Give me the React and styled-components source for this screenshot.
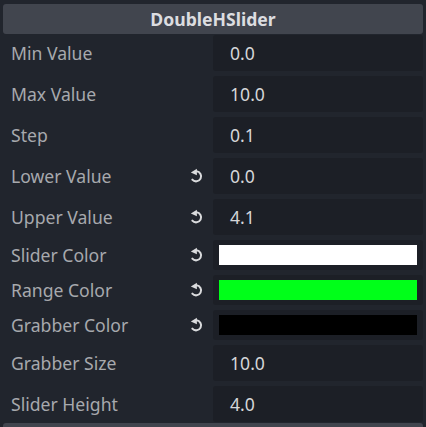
import styled, { createGlobalStyle } from "styled-components"

const GlobalStyle = createGlobalStyle`
  html, body {
    margin: 0;
    padding: 0;
    background: #21252d;
  }
  body {
    font-family: "Noto Sans", "Open Sans", sans-serif;
  }
`

const rows = [
  { label: "Min Value", value: "0.0" },
  { label: "Max Value", value: "10.0" },
  { label: "Step", value: "0.1" },
  { label: "Lower Value", value: "0.0", reset: true },
  { label: "Upper Value", value: "4.1", reset: true },
  { label: "Slider Color", color: "#ffffff", reset: true },
  { label: "Range Color", color: "#00ff19", reset: true },
  { label: "Grabber Color", color: "#000000", reset: true },
  { label: "Grabber Size", value: "10.0" },
  { label: "Slider Height", value: "4.0" },
]

// godot style "revert" arrow
const ResetIcon = () => (
  <svg width="16" height="16" viewBox="0 0 14 14">
    <path
      d="M6.6 2.9 A4.4 4.4 0 1 1 2.9 10.2"
      fill="none"
      stroke="#dadbdd"
      strokeWidth="1.8"
      strokeLinecap="round"
    />
    <path d="M1.6 4.0 L6.9 0.6 L6.9 6.4 Z" fill="#dadbdd" />
  </svg>
)

export default function App() {
  return (
    <>
      <GlobalStyle />
      <Panel>
        <Header>DoubleHSlider</Header>
        <Rows>
          {rows.map((row) => (
            <Row key={row.label}>
              <Label>
                <span>{row.label}</span>
                {row.reset && (
                  <Reset>
                    <ResetIcon />
                  </Reset>
                )}
              </Label>
              <ValueBox $tall={!row.color}>
                {row.color ? <Swatch $color={row.color} /> : <Value>{row.value}</Value>}
              </ValueBox>
            </Row>
          ))}
        </Rows>
        <NextHeader />
      </Panel>
    </>
  )
}

const Panel = styled.div`
display: flex;
flex-direction: column;
padding: 4px 3px 0 3px;
height: 427px;
box-sizing: border-box;
overflow: hidden;
`
const Header = styled.div`
flex-shrink: 0;
height: 30px;
display: flex;
align-items: center;
justify-content: center;
background: #41454e;
border-radius: 3px;
color: #dcdde0;
font-weight: bold;
font-size: 17.6px;
`
const Rows = styled.div`
flex-shrink: 0;
display: flex;
flex-direction: column;
gap: 5px;
padding-top: 1px;
`
const Row = styled.div`
display: grid;
grid-template-columns: 210px 1fr;
`
const Label = styled.div`
display: flex;
align-items: center;
justify-content: space-between;
padding: 0 8px 0 8px;
color: #a7a9ad;
font-size: 17.6px;
`
const Reset = styled.span`
display: flex;
align-items: center;
`
const ValueBox = styled.div`
height: ${(p) => (p.$tall ? "36px" : "30px")};
background: #1c1f26;
border-radius: 3px;
display: flex;
align-items: center;
padding: ${(p) => (p.$tall ? "0 17px" : "0 6px")};
box-sizing: border-box;
`
const Value = styled.span`
color: #d5d6d9;
font-size: 17.6px;
`
const Swatch = styled.div`
flex: 1;
height: 20px;
background: ${(p) => p.$color};
`
const NextHeader = styled.div`
flex-shrink: 0;
margin-top: 1px;
height: 30px;
background: #41454e;
border-radius: 3px;
`
